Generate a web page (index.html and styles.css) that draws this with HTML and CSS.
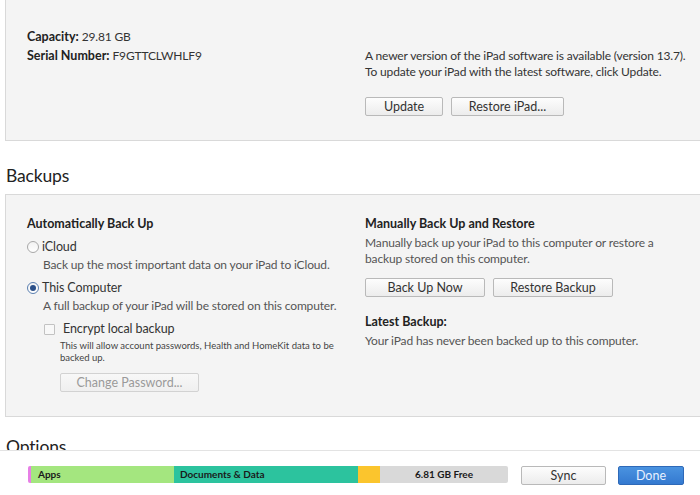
FILE: index.html
```html
<!DOCTYPE html>
<html lang="en">

<head>
    <meta charset="UTF-8">
    <meta name="viewport" content="width=device-width, initial-scale=1.0">
    <title>iPad Summary</title>
    <link rel="stylesheet" href="styles.css">
</head>

<body>
    <div class="page">
        <div class="content">
            <div class="panel summary">
                <div class="col">
                    <p class="line"><b>Capacity:</b> 29.81 GB</p>
                    <p class="line"><b>Serial Number:</b> F9GTTCLWHLF9</p>
                </div>
                <div class="col update">
                    <p class="para">A newer version of the iPad software is available (version 13.7).<br>To update your iPad with the latest software, click Update.</p>
                    <div class="btn-row">
                        <button class="btn w-update">Update</button>
                        <button class="btn w-restore">Restore iPad...</button>
                    </div>
                </div>
            </div>

            <h2 class="section-title">Backups</h2>
            <div class="panel backups">
                <div class="col">
                    <h3 class="label">Automatically Back Up</h3>
                    <label class="option first">
                        <span class="radio"></span>iCloud
                    </label>
                    <p class="desc">Back up the most important data on your iPad to iCloud.</p>
                    <label class="option">
                        <span class="radio checked"></span>This Computer
                    </label>
                    <p class="desc">A full backup of your iPad will be stored on this computer.</p>
                    <label class="check-row">
                        <span class="checkbox"></span>Encrypt local backup
                    </label>
                    <p class="note">This will allow account passwords, Health and HomeKit data to be backed up.</p>
                    <button class="btn w-password" disabled>Change Password...</button>
                </div>
                <div class="col">
                    <h3 class="label">Manually Back Up and Restore</h3>
                    <p class="para desc-right">Manually back up your iPad to this computer or restore a backup stored on this computer.</p>
                    <div class="btn-row manual">
                        <button class="btn w-backup">Back Up Now</button>
                        <button class="btn w-backup">Restore Backup</button>
                    </div>
                    <h3 class="label latest">Latest Backup:</h3>
                    <p class="desc plain">Your iPad has never been backed up to this computer.</p>
                </div>
            </div>

            <h2 class="section-title options">Options</h2>
        </div>

        <div class="footer">
            <div class="storage">
                <span class="seg seg-other"></span>
                <span class="seg seg-apps">Apps</span>
                <span class="seg seg-docs">Documents &amp; Data</span>
                <span class="seg seg-misc"></span>
                <span class="seg seg-free">6.81 GB Free</span>
            </div>
            <button class="btn w-sync">Sync</button>
            <button class="btn done w-done">Done</button>
        </div>
    </div>
</body>

</html>
```

FILE: styles.css
```css
* {
    margin: 0;
    padding: 0;
    box-sizing: border-box;
}

body {
    font-family: 'Lato', 'Noto Sans', sans-serif;
    font-size: 12px;
    letter-spacing: -0.15px;
    color: #333;
    background: #fff;
}

.page {
    width: 700px;
    height: 495px;
    display: flex;
    flex-direction: column;
    overflow: hidden;
}

.content {
    flex: 1;
    overflow: hidden;
    padding-left: 5px;
}

.panel {
    background: #f4f4f4;
    border: 1px solid #d9d9d9;
    border-right: none;
    margin-right: -20px;
    display: grid;
    grid-template-columns: 338px 1fr;
    padding-left: 21px;
}

.summary {
    border-top: none;
    height: 141px;
    padding-top: 27px;
}

.line {
    line-height: 19px;
}

.line b,
.label {
    font-size: 12.5px;
    font-weight: 700;
    letter-spacing: 0;
    color: #222;
}

.update {
    padding-top: 21px;
}

.para {
    line-height: 16px;
}

.btn-row {
    display: flex;
    gap: 8px;
    margin-top: 17px;
}

.btn {
    font-family: inherit;
    font-size: 12.5px;
    letter-spacing: 0;
    color: #333;
    height: 19px;
    line-height: 17px;
    background: linear-gradient(#fdfdfd, #ececec);
    border: 1px solid #b9b9b9;
    border-radius: 2px;
}

.btn:disabled {
    color: #9a9a9a;
    border-color: #d2d2d2;
    background: linear-gradient(#f8f8f8, #efefef);
}

.w-update { width: 78px; }
.w-restore { width: 113px; }
.w-backup { width: 120px; }
.w-password { width: 139px; margin: 9px 0 0 33px; }
.w-sync { width: 85px; }
.w-done { width: 66px; }

.section-title {
    font-size: 17.5px;
    font-weight: 400;
    color: #222;
    line-height: 26px;
    height: 53px;
    padding-top: 22px;
    padding-left: 1px;
}

.options {
    height: auto;
    padding-top: 17px;
}

.backups {
    height: 223px;
    padding-top: 20px;
}

.label {
    line-height: 18px;
}

.option {
    display: flex;
    align-items: center;
    gap: 3px;
    font-size: 12.5px;
    letter-spacing: -0.1px;
    line-height: 18px;
    margin-top: 5px;
}

.radio {
    width: 12px;
    height: 12px;
    border: 1px solid #a8a8a8;
    border-radius: 50%;
    background: linear-gradient(#f2f2f2, #ffffff);
    display: flex;
    align-items: center;
    justify-content: center;
}

.radio.checked {
    border-color: #5a7fb0;
}

.radio.checked::after {
    content: '';
    width: 6px;
    height: 6px;
    border-radius: 50%;
    background: #2a4f88;
}

.desc {
    color: #555;
    line-height: 18px;
    padding-left: 16px;
}

.desc.plain {
    padding-left: 0;
    margin-top: 1px;
}

.check-row {
    display: flex;
    align-items: center;
    gap: 8px;
    font-size: 12.5px;
    letter-spacing: -0.1px;
    line-height: 18px;
    margin-top: 5px;
    padding-left: 17px;
}

.checkbox {
    width: 11px;
    height: 11px;
    border: 1px solid #c2c2c2;
    background: #f8f8f8;
    border-radius: 1px;
}

.note {
    font-size: 9.5px;
    letter-spacing: 0;
    line-height: 12px;
    color: #444;
    padding-left: 33px;
    margin-top: 2px;
    width: 320px;
}

.desc-right {
    color: #555;
    margin-top: 2px;
    width: 300px;
}

.manual {
    margin-top: 11px;
}

.latest {
    margin-top: 16px;
}

.footer {
    height: 45px;
    flex-shrink: 0;
    border-top: 1px solid #e3e3e3;
    background: #fff;
    display: flex;
    align-items: flex-start;
    padding: 15px 0 0 28px;
}

.storage {
    width: 480px;
    height: 17px;
    display: flex;
    border-radius: 2px;
    overflow: hidden;
    margin-right: 13px;
}

.w-done {
    margin-left: 12px;
}

.seg {
    font-size: 10px;
    font-weight: 700;
    letter-spacing: 0;
    color: #1a1a1a;
    line-height: 17px;
}

.seg-other { width: 3px; background: #e77fe6; }
.seg-apps { width: 143px; background: #a4e67f; padding-left: 7px; }
.seg-docs { width: 184px; background: #2cc39e; padding-left: 6px; }
.seg-misc { width: 22px; background: #fbc52d; }
.seg-free { flex: 1; background: #d9d9d9; text-align: center; }

.done {
    color: #e8f1ff;
    background: linear-gradient(#4a93e0, #3479d0);
    border-color: #2e69b8;
}
```
